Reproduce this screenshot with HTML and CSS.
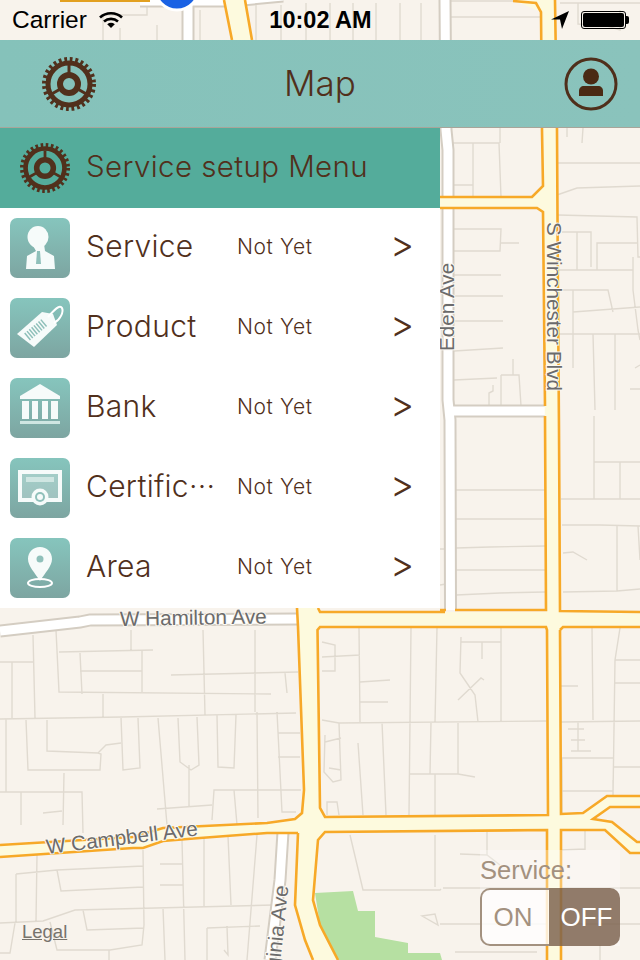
FILE: index.html
```html
<!DOCTYPE html>
<html lang="en">
<head>
    <meta charset="UTF-8">
    <meta name="viewport" content="width=device-width, initial-scale=1.0">
    <title>Service setup</title>
    <link rel="stylesheet" href="styles.css">
</head>
<body>
    <div class="screen">
        <!-- Map canvas -->
        <svg class="map" viewBox="0 0 640 960" width="640" height="960">
            <path class="park" d="M315 893L353 891L358 911L375 911L375 937L408 943L408 953L440 953L442 960L338 960L320 925Z"/>

            <path class="streets" d="M147 0V15H103V40M120 28V40M157 25V40M200 10V40M256 5V40M281 5V40M306 3V40M330 3V40M353 3V40M376 3V40M400 3V40M421 3V40M451 17H540M451 1H540M578 3V24L604 25L620 30V10M560 3H640
            M452 143H499L501 197M473 143V197M452 185H473M500 128V143M557 163H640M567 128V137M583 128L582 143M557 195L577 188L640 186
            M558 215L637 217L638 257H640M562 232H591V267M577 232V270M597 270V243H637M559 270H633V257M633 270L633 290L638 330L640 340M559 290H608L613 312M573 290V368M573 312L640 307M559 334H640M593 334L595 410M615 334V410M630 389H640M635 368L640 365
            M454 229H501L500 251H454M501 243H519M454 275H501M454 296H503M454 321H503M454 351L503 348M454 380L497 378M501 375H519L521 406M501 375V406M513 359V375M489 406V393L493 391V385
            M456 490H545M456 519H545M456 548L490 547L545 546M456 570H545M456 595L500 593L545 592M440 549H446M440 585L446 584
            M594 416V499M594 462H640M620 462V499M561 499H640M562 525H600L640 526M617 526V591M638 526L640 560M563 592L617 591L640 589M563 553L573 552L587 560
            M0 662H33M33 635L35 718M12 662V718M56 630L59 692L271 694M59 652L153 650M80 653L82 694M80 671H142M142 650V692M131 630V650M103 694V717M0 719L122 717L296 713M171 675L298 672M203 630L205 715M255 630V712M285 673L287 693
            M6 719V792M26 720L28 770H100L101 754L98 753L47 751V720M98 753L106 745L121 743M121 717L123 770L140 768L138 718M158 718L167 825M178 718L180 762L191 770L199 765L197 717M217 715L218 767L234 768L236 715M257 712L258 818M277 712L282 812L296 812M278 733H300M278 757H300M64 773L63 825M0 792H82L83 833M21 792V825M212 820L214 790H301M157 809L212 805M189 765V807M234 790L237 825M43 813L62 811
            M359 628L360 722M411 628L409 815M437 628L435 722M501 628V722M322 720L339 723L547 721M322 642L335 645V671H322M322 657L360 655M360 682L390 680M360 702H388M461 637L460 673L475 695L478 722M461 642H501M482 642V659M458 700L481 678L484 680M339 723L341 780L333 782L324 772L325 735M325 742L341 738M329 768L341 770M358 743L363 815M382 722L386 815M431 722L430 774M409 774H458L475 777M458 722V774M435 774V815M327 815V802H337L339 815
            M592 628L593 720M620 628L615 660L613 796M561 722L640 721M561 686H578M615 660H640M615 683H640M568 729H584M578 722V751M571 740H585M571 751H591M562 758H613M562 758V813M613 767H640M562 791H613
            M37 855L36 921M16 874L57 870L143 866M57 870L61 891L143 887M16 874V922M0 923L43 921L75 910L273 905M143 850L144 925L142 945L110 950H57L50 922M83 910L87 930L144 928M182 840L185 960M160 864H183M160 885H183M204 838V906M228 836L231 905M257 835L247 960M163 908L165 960M207 928L260 926M207 928V960M227 926L228 955L224 950M0 953H10L15 923M109 950V960
            M350 835L363 890H440L441 889M435 835V887M422 916L435 914L438 925Z
            M487 832V855M460 854L487 855L500 865M443 888H640M585 830V850M561 850L585 849M613 780V796M440 924H640M455 952L537 952M600 945V960"/>

            <!-- minor roads -->
            <g class="minor">
                <path d="M445 0L446 130L448 150L448 400L450 420L450.5 610"/>
                <path d="M450 411H546"/>
                <path d="M0 631L80 622L90 620L298 619"/>
                <path d="M283 832L280 880L270 960"/>
                <path d="M188 5V40"/>
                <path d="M140 1H232L283 -4"/>
            </g>
            <g class="minor-fill">
                <path d="M445 0L446 130L448 150L448 400L450 420L450.5 610"/>
                <path d="M450 411H546"/>
                <path d="M0 631L80 622L90 620L298 619"/>
                <path d="M283 832L280 880L270 960"/>
                <path d="M188 5V40"/>
                <path d="M140 1H232L283 -4"/>
            </g>

            <!-- yellow highways -->
            <path class="road" d="M513 0H555L557 130L558 300L559 430L560 612L561 960H547L546 610L545 430L543 300L541 12Z"/>
            <path class="road" d="M440 197H532L543 186V211L537 208H440Z"/>
            <path class="road" d="M297 600H317L320 612H640V628H298Z"/>
            <path class="road" d="M298 612L304 790L302 813L295 819L267 823L163 828L133 837L0 845V857L133 848L143 848L163 841L200 838L267 833L298 833L295 905L305 940L313 960H338L320 925L313 900L318 840L325 832L547 830H561H605L630 853H640V842H637L612 822L593 819L610 807H640V796H607L583 813L561 814L547 815L325 817L320 808L317 612Z"/>
            <path class="road" d="M224 0H245L252 40H232Z"/>

            <path class="edge" d="M513 1L536 3L541 12L542 130L543 186L532 197H440M440 208H537L543 212L545 406M545 416L546 610H455M446 610H440M555 0L557 130L558 300L559 430L560 611L640 612
            M298 627L304 790L302 813L295 819L267 823L163 828L133 837L0 845M297 608L298 627M318 608L320 612H445
            M320 627H546L547 630L548 815L325 817L320 808L317.5 630ZM560 630L563 627H640M560 630L561 814L583 813L607 796H640M640 807H610L593 819L612 822L637 842H640M640 853H630L605 830H561V960M547 960V830L325 832L318 840L313 900L320 925L338 960M298 833H267L200 838L163 841L143 848H133L0 857M298 833L295 905L305 940L313 960M224 0L232 40M245 0L252 40"/>
            <path class="edge-dark" d="M60 0H150"/>

            <circle class="location" cx="177" cy="-12" r="22"/>

            <text class="label" x="120" y="626" transform="rotate(-1 120 626)">W Hamilton Ave</text>
            <text class="label" x="47" y="854" transform="rotate(-7 47 854)">W Campbell Ave</text>
            <text class="label" x="454" y="351" transform="rotate(-90 454 351)">Eden Ave</text>
            <text class="label" x="547" y="222" transform="rotate(90 547 222)">S Winchester Blvd</text>
            <text class="label" x="277" y="994" transform="rotate(-84 277 994)">Virginia Ave</text>
        </svg>

        <a class="legal" href="#legal">Legal</a>

        <!-- Status bar -->
        <div class="status-bar">
            <div class="status-left">
                <span>Carrier</span>
                <svg class="wifi" viewBox="0 0 24 18" width="24" height="18">
                    <path d="M1 6.5C7 0.8 17 0.8 23 6.5M5 10.5C9 7 15 7 19 10.5" fill="none" stroke="#000" stroke-width="2.6"/>
                    <path d="M8.2 13.2C10.5 11.4 13.5 11.4 15.8 13.2L12 17Z" fill="#000"/>
                </svg>
            </div>
            <div class="status-time">10:02 AM</div>
            <div class="status-right">
                <svg class="arrow" viewBox="0 0 18 18" width="18" height="18">
                    <path d="M18 0L0 8.5L9 8.5L11 18Z" fill="#000"/>
                </svg>
                <div class="battery"><div class="battery-fill"></div></div>
                <div class="battery-nub"></div>
            </div>
        </div>

        <!-- Nav bar -->
        <div class="nav-bar">
            <svg class="gear" width="54" height="54"><use href="#gear-icon"/></svg>
            <h1 class="nav-title">Map</h1>
            <svg class="profile" viewBox="0 0 54 54" width="54" height="54">
                <circle cx="27" cy="27" r="25" fill="none" stroke="#4f2f1b" stroke-width="3"/>
                <circle cx="27" cy="19.5" r="8" fill="#4a2a14"/>
                <path d="M15 39V34C15 31 17 29 20 29H34C37 29 39 31 39 34V39Z" fill="#4a2a14"/>
            </svg>
        </div>

        <!-- Service setup menu -->
        <div class="menu">
            <div class="menu-header">
                <svg class="gear" width="50" height="50"><use href="#gear-icon"/></svg>
                <span class="menu-title">Service setup Menu</span>
            </div>

            <a class="menu-row" href="#service">
                <svg class="tile" viewBox="0 0 60 60">
                    <ellipse cx="28" cy="19" rx="10.5" ry="11"/>
                    <path d="M22 26H34L35 33L44 38L45 51H16L17 38L26 33Z"/>
                    <path class="tile-mark" d="M27 33H30L31 46H26Z"/>
                </svg>
                <span class="menu-label">Service</span>
                <span class="menu-status">Not Yet</span>
                <span class="menu-arrow">&gt;</span>
            </a>
            <a class="menu-row" href="#product">
                <svg class="tile" viewBox="0 0 60 60">
                    <path d="M7 36L32 14L43 16L47 27L24 49Z"/>
                    <path class="tile-bars" d="M17 39L35 24"/>
                    <path d="M38 19C44 12 50 6 52 10C54 14 50 22 44 25" fill="none" stroke="#fff" stroke-width="2"/>
                </svg>
                <span class="menu-label">Product</span>
                <span class="menu-status">Not Yet</span>
                <span class="menu-arrow">&gt;</span>
            </a>
            <a class="menu-row" href="#bank">
                <svg class="tile" viewBox="0 0 60 60">
                    <path d="M30 6L50 18V21H10V18Z"/>
                    <path d="M12 23H19V41H12ZM22 23H28V41H22ZM32 23H38V41H32ZM41 23H48V41H41Z"/>
                    <path d="M10 43H50V46H10Z" class="tile-soft"/>
                </svg>
                <span class="menu-label">Bank</span>
                <span class="menu-status">Not Yet</span>
                <span class="menu-arrow">&gt;</span>
            </a>
            <a class="menu-row" href="#certificate">
                <svg class="tile" viewBox="0 0 60 60">
                    <path class="tile-glass" d="M12 16H48V40H12Z"/>
                    <path d="M8 12H52V44H8ZM12 16V40H48V16Z" fill-rule="evenodd"/>
                    <path class="tile-soft" d="M16 19H44V24H16Z"/>
                    <circle cx="30" cy="39" r="8.5"/>
                    <circle class="tile-mark" cx="30" cy="39" r="5"/>
                    <circle cx="30" cy="39" r="3"/>
                </svg>
                <span class="menu-label">Certific···</span>
                <span class="menu-status">Not Yet</span>
                <span class="menu-arrow">&gt;</span>
            </a>
            <a class="menu-row" href="#area">
                <svg class="tile" viewBox="0 0 60 60">
                    <path d="M30 9C37 9 42 14 42 21C42 28 35 35 30 43C25 35 18 28 18 21C18 14 23 9 30 9Z"/>
                    <circle class="tile-mark" cx="30" cy="21" r="3.5"/>
                    <ellipse cx="30" cy="45" rx="12" ry="4" fill="none" stroke="#fff" stroke-width="2"/>
                </svg>
                <span class="menu-label">Area</span>
                <span class="menu-status">Not Yet</span>
                <span class="menu-arrow">&gt;</span>
            </a>
        </div>

        <!-- On / off switch over the map -->
        <div class="service-switch">
            <div class="service-title">Service:</div>
            <div class="switch">
                <div class="switch-on">ON</div>
                <div class="switch-off">OFF</div>
            </div>
        </div>

        <svg class="defs" width="0" height="0">
            <symbol id="gear-icon" viewBox="-27 -27 54 54">
                <circle cx="0" cy="0" r="24.5" fill="none" stroke="#51301c" stroke-width="5" stroke-dasharray="2.75 2.75"/>
                <circle cx="0" cy="0" r="21" fill="none" stroke="#51301c" stroke-width="5"/>
                <circle cx="0" cy="0" r="9" fill="none" stroke="#51301c" stroke-width="6"/>
                <path d="M0 -19V-10M-16.5 9.5L-8.7 5M16.5 9.5L8.7 5" stroke="#51301c" stroke-width="3"/>
            </symbol>
        </svg>
    </div>
</body>
</html>
```

FILE: styles.css
```css
body {
    margin: 0;
    background-color: #f8f3ec;
    font-family: 'Inter', sans-serif;
    font-weight: 300;
    color: #51301c;
}
.screen {
    position: relative;
    width: 640px;
    height: 960px;
    overflow: hidden;
}
.map {
    position: absolute;
    top: 0;
    left: 0;
    background-color: #f8f3ec;
}
.defs {
    position: absolute;
}
.park {
    fill: #b6e0a2;
}
.streets {
    fill: none;
    stroke: #e0dad0;
    stroke-width: 1.4;
}
.minor path {
    fill: none;
    stroke: #d4cdc2;
    stroke-width: 13;
}
.minor-fill path {
    fill: none;
    stroke: #ffffff;
    stroke-width: 9;
}
.road {
    fill: #fdfade;
}
.edge {
    fill: none;
    stroke: #f7a928;
    stroke-width: 2.6;
}
.edge-dark {
    fill: none;
    stroke: #e2a020;
    stroke-width: 4;
}
.location {
    fill: #1a62e4;
    stroke: #ffffff;
    stroke-width: 3;
}
.label {
    font-family: 'Liberation Sans', sans-serif;
    font-size: 20.7px;
    fill: #6b6b6b;
    stroke: #fbf8f2;
    stroke-width: 2px;
    paint-order: stroke;
}
.legal {
    position: absolute;
    left: 22px;
    top: 921px;
    font-family: 'Liberation Sans', sans-serif;
    font-weight: 400;
    font-size: 18.5px;
    color: #77736c;
}

.status-bar {
    position: relative;
    display: grid;
    grid-template-columns: 1fr auto 1fr;
    align-items: center;
    height: 40px;
    padding: 0 11px 0 12px;
    box-sizing: border-box;
    font-family: 'Liberation Sans', sans-serif;
    font-weight: 400;
    color: #000;
}
.status-left {
    display: flex;
    align-items: center;
    gap: 12px;
    font-size: 24.5px;
}
.status-time {
    font-size: 23.5px;
    font-weight: bold;
}
.status-right {
    display: flex;
    align-items: center;
    justify-content: flex-end;
}
.arrow {
    margin-right: 12px;
}
.battery {
    width: 45px;
    height: 18px;
    box-sizing: border-box;
    border: 1px solid #000;
    border-radius: 3px;
    padding: 1px;
}
.battery-fill {
    height: 100%;
    background-color: #000;
    border-radius: 2px;
}
.battery-nub {
    width: 3px;
    height: 8px;
    background-color: #000;
    border-radius: 0 2px 2px 0;
}

.nav-bar {
    position: relative;
    display: grid;
    grid-template-columns: 1fr auto 1fr;
    align-items: center;
    height: 88px;
    padding: 0 22px 0 42px;
    background: linear-gradient(90deg, #85c2ba, #8ac3bc);
    border-bottom: 1px solid #a8a59a;
    box-sizing: border-box;
}
.nav-bar .profile {
    justify-self: end;
}
.nav-title {
    margin: 0 20px 2px 0;
    font-size: 35px;
    font-weight: 300;
}

.menu {
    position: relative;
    width: 440px;
    background-color: #fff;
}
.menu-header {
    display: flex;
    align-items: center;
    gap: 16px;
    height: 80px;
    padding-left: 20px;
    background-color: #54ac9b;
}
.menu-title {
    margin-bottom: 4px;
    font-size: 29.5px;
    letter-spacing: 0.4px;
}
.menu-row {
    display: flex;
    align-items: center;
    height: 80px;
    padding-left: 10px;
    box-sizing: border-box;
    text-decoration: none;
    color: #51301c;
}
.tile {
    flex: none;
    width: 60px;
    height: 60px;
    margin-right: 16px;
    border-radius: 7px;
    background: linear-gradient(180deg, #86c5bd, #7da5a1);
    fill: #f6fbfa;
}
.tile-mark {
    fill: #8fc0ba;
}
.tile-bars {
    fill: none;
    stroke: #8fc0ba;
    stroke-width: 9;
    stroke-dasharray: 1.5 1.5;
}
.tile-soft {
    fill: #cfe6e2;
}
.tile-glass {
    fill: rgba(255, 255, 255, 0.25);
}
.menu-label {
    flex: none;
    width: 151px;
    margin-bottom: 4px;
    font-size: 30px;
    letter-spacing: 0.3px;
}
.menu-status {
    flex: none;
    width: 155px;
    margin-bottom: 4px;
    font-size: 21px;
    letter-spacing: 0.6px;
}
.menu-arrow {
    margin-bottom: 10px;
    margin-left: -2px;
    font-size: 37px;
}

.service-switch {
    position: absolute;
    right: 20px;
    bottom: 14px;
    width: 140px;
    padding-top: 6px;
    background-color: rgba(255, 255, 255, 0.3);
}
.service-title {
    height: 32px;
    font-family: 'Liberation Sans', sans-serif;
    font-weight: 400;
    font-size: 25.5px;
    color: #a3917f;
}
.switch {
    display: flex;
    height: 58px;
    font-family: 'Liberation Sans', sans-serif;
    font-weight: 400;
    font-size: 26px;
    line-height: 58px;
    text-align: center;
}
.switch-on {
    width: 69px;
    box-sizing: border-box;
    padding-right: 5px;
    border: 2px solid #a3917f;
    border-right: none;
    border-radius: 10px 0 0 10px;
    line-height: 54px;
    background-color: rgba(255, 255, 255, 0.7);
    color: #a3917f;
}
.switch-off {
    width: 71px;
    padding-left: 4px;
    box-sizing: border-box;
    border-radius: 0 10px 10px 0;
    background-color: rgba(110, 82, 60, 0.75);
    color: #fff;
}
```
